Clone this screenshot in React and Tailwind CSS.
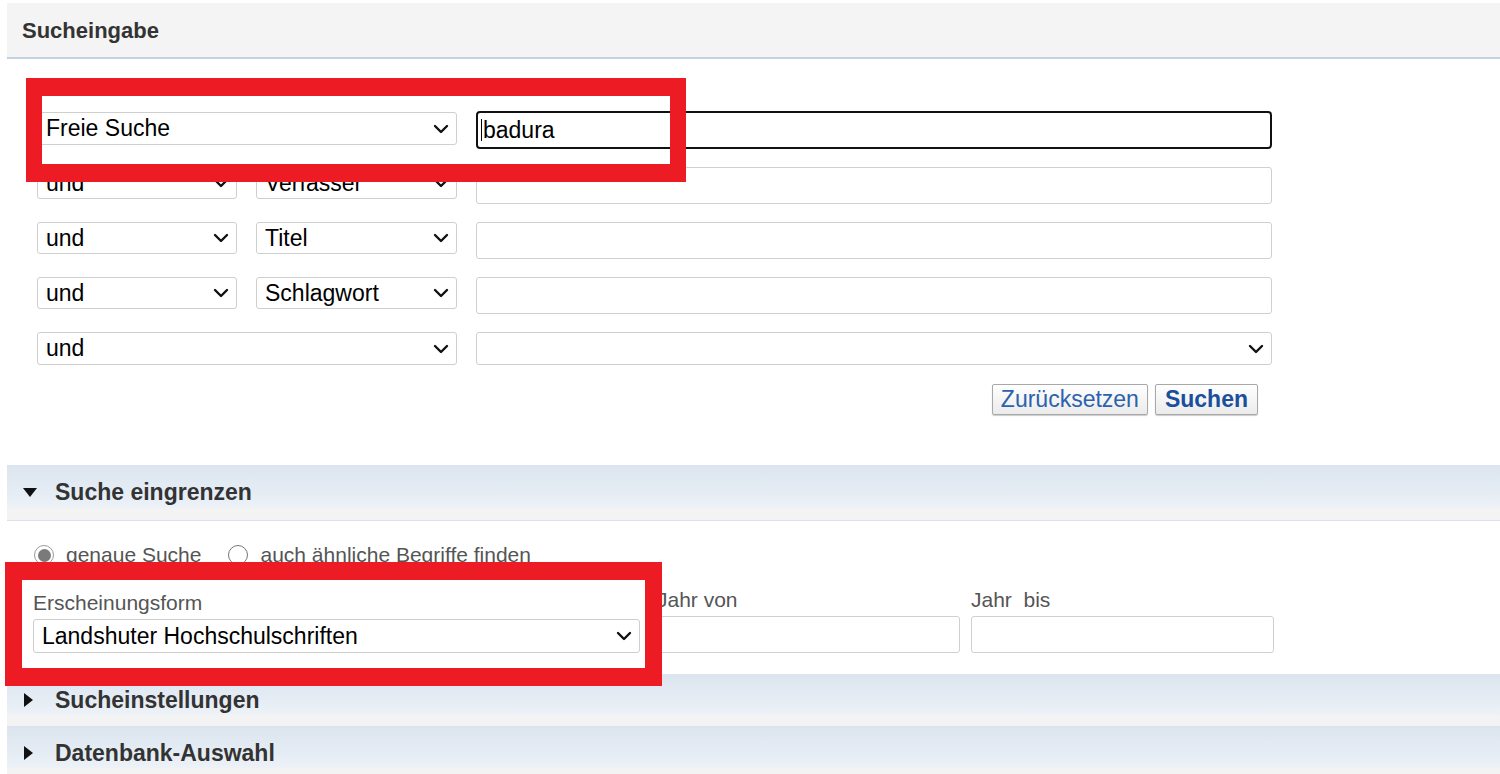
import React from 'react';

function Chevron() {
  return (
    <svg width="16" height="16" viewBox="0 0 16 16" className="shrink-0">
      <polyline points="2,5 8,11 14,5" fill="none" stroke="#111" strokeWidth="2.4" strokeLinecap="round" strokeLinejoin="round" />
    </svg>
  );
}

function Select({ value, width, height = 'h-[32px]' }) {
  return (
    <div className={`${width} ${height} shrink-0 flex items-center justify-between pl-[8px] pr-[7px] bg-white border border-[#cfcfcf] rounded-[3px] text-[23px] text-black leading-none`}>
      <span>{value}</span>
      <Chevron />
    </div>
  );
}

function TextBox({ className = '' }) {
  return <div className={`bg-white border border-[#d0d0d0] rounded-[3px] ${className}`} />;
}

function SectionBar({ title, open, height = 'h-[55px]' }) {
  return (
    <div className={`${height} relative border-b border-[#dbe4ee] bg-[linear-gradient(to_bottom,#dce5ef_0%,#e6edf5_55%,#edf2f7_78%,#f3f3f3_78%,#f3f3f3_100%)] flex items-center`}>
      <div className="w-[48px] flex justify-start pl-[16px]">
        {open ? (
          <svg width="14" height="9" viewBox="0 0 14 9"><polygon points="0,0 14,0 7,9" fill="#111" /></svg>
        ) : (
          <svg width="9" height="14" viewBox="0 0 9 14" className="ml-[1px]"><polygon points="0,0 9,7 0,14" fill="#111" /></svg>
        )}
      </div>
      <span className="text-[23px] font-bold text-[#333]">{title}</span>
    </div>
  );
}

function Radio({ checked, label }) {
  return (
    <div className="flex items-center gap-[12px]">
      {checked ? (
        <div className="w-[20px] h-[20px] rounded-full border border-[#9a9a9a] bg-white flex items-center justify-center">
          <div className="w-[13px] h-[13px] rounded-full bg-[#7a7a7a]" />
        </div>
      ) : (
        <div className="w-[20px] h-[20px] rounded-full border border-[#767676] bg-white" />
      )}
      <span className="text-[21px] text-[#555]">{label}</span>
    </div>
  );
}

export default function App() {
  const rows = [
    ['und', 'Verfasser'],
    ['und', 'Titel'],
    ['und', 'Schlagwort'],
  ];

  return (
    <div className="relative w-[1500px] h-[774px] overflow-hidden bg-white pt-[3px] pl-[7px]" style={{ fontFamily: '"Liberation Sans", Arial, sans-serif' }}>
      {/* Sucheingabe */}
      <div className="h-[56px] bg-[#f4f4f4] border-b-2 border-[#c4d1e1] flex items-center pl-[15px] text-[22px] font-bold text-[#333]">
        Sucheingabe
      </div>

      <div className="pl-[30px] pt-[53px] w-[1265px]">
        <div className="flex items-start gap-[19px]">
          <Select value="Freie Suche" width="w-[420px]" height="h-[33px]" />
          <div className="w-[797px] h-[38px] -mt-[1px] border-2 border-[#111] rounded-[4px] flex items-center pl-[3px] text-[23px] text-black">
            <span className="w-[1px] h-[22px] bg-black mr-[1px]" />
            <span>badura</span>
          </div>
        </div>

        {rows.map(([op, field]) => (
          <div key={field} className="flex items-start gap-[19px] mt-[18px]">
            <Select value={op} width="w-[200px]" />
            <Select value={field} width="w-[201px]" />
            <TextBox className="w-[797px] h-[37px]" />
          </div>
        ))}

        <div className="flex items-start gap-[19px] mt-[18px]">
          <Select value="und" width="w-[420px]" height="h-[33px]" />
          <Select value="" width="w-[796px]" height="h-[33px]" />
        </div>

        <div className="flex justify-end gap-[7px] mt-[19px] pr-[14px]">
          <button className="h-[31px] px-[8px] border border-[#a8a8a8] rounded-[2px] bg-[linear-gradient(to_bottom,#ffffff,#ebebeb)] shadow-[0_1px_1px_rgba(0,0,0,0.2)] text-[23px] leading-none text-[#2b62ad]">
            Zurücksetzen
          </button>
          <button className="h-[31px] px-[9px] border border-[#a8a8a8] rounded-[2px] bg-[linear-gradient(to_bottom,#ffffff,#ebebeb)] shadow-[0_1px_1px_rgba(0,0,0,0.2)] text-[23px] leading-none font-bold text-[#1b4f9c]">
            Suchen
          </button>
        </div>
      </div>

      <div className="mt-[50px]">
        <SectionBar title="Suche eingrenzen" open height="h-[56px]" />
      </div>

      <div className="flex items-center gap-[27px] pl-[27px] mt-[22px] h-[24px]">
        <Radio checked label="genaue Suche" />
        <Radio label="auch ähnliche Begriffe finden" />
      </div>

      <div className="flex items-end pl-[26px] mt-[21px]">
        <div className="w-[607px]">
          <div className="text-[21px] text-[#555] leading-[23px] mb-[5px]">Erscheinungsform</div>
          <Select value="Landshuter Hochschulschriften" width="w-[607px]" height="h-[34px]" />
        </div>
        <div className="w-[303px] ml-[17px]">
          <div className="text-[21px] text-[#555] leading-[23px] mb-[5px]">Jahr von</div>
          <TextBox className="w-[303px] h-[37px]" />
        </div>
        <div className="w-[303px] ml-[11px]">
          <div className="text-[21px] text-[#555] leading-[23px] mb-[5px] whitespace-pre">Jahr  bis</div>
          <TextBox className="w-[303px] h-[37px]" />
        </div>
      </div>

      <div className="mt-[21px]">
        <SectionBar title="Sucheinstellungen" height="h-[53px]" />
        <SectionBar title="Datenbank-Auswahl" height="h-[53px]" />
      </div>

      {/* annotation frames */}
      <div className="absolute left-[26px] top-[78px] w-[660px] h-[104px] border-x-[16px] border-t-[18px] border-b-[18px] border-[#ed1c24] pointer-events-none" />
      <div className="absolute left-[5px] top-[562px] w-[657px] h-[124px] border-x-[17px] border-t-[18px] border-b-[18px] border-[#ed1c24] pointer-events-none" />
    </div>
  );
}
